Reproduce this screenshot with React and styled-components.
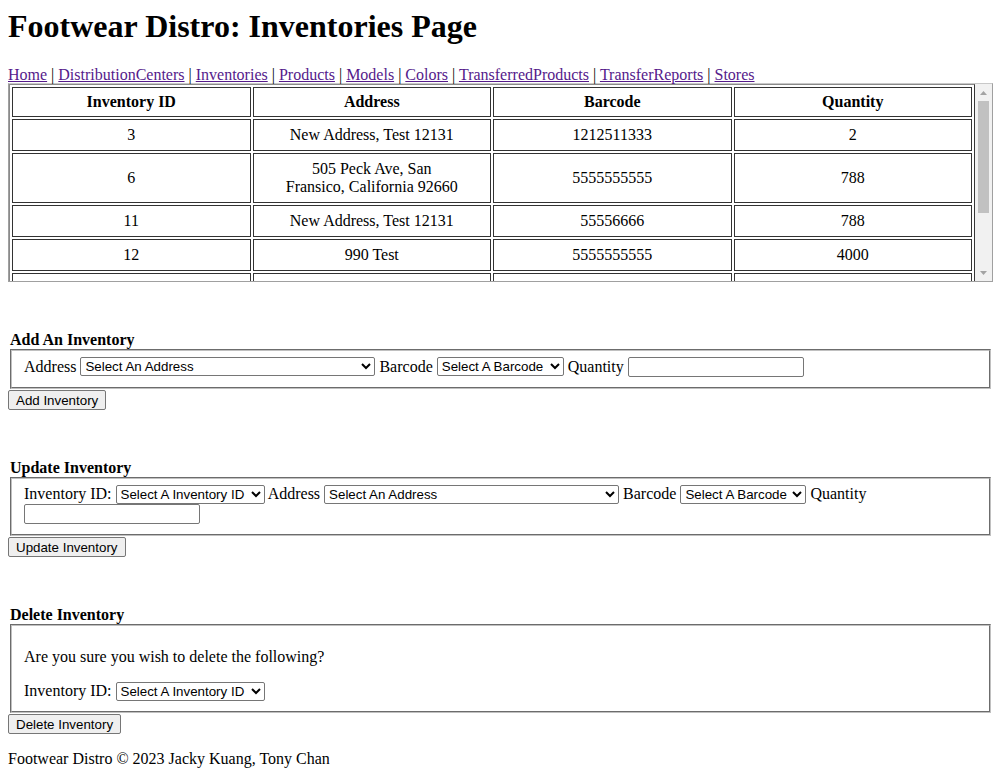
import React from 'react';
import styled, { createGlobalStyle } from 'styled-components';

// --- Global ---

const GlobalStyle = createGlobalStyle`
  body {
    margin: 8px;
    background: #fff;
    color: #000;
    font-family: "Liberation Serif", "Times New Roman", serif;
    font-size: 16px;
  }
`;

// --- Styled Components ---

const Title = styled.h1`
  margin: 0 0 21px;
  font-size: 32px;
  font-weight: bold;
  line-height: 37px;
`;

const Nav = styled.nav`
  line-height: 17px;
`;

const NavLink = styled.a`
  color: #551a8b;
  text-decoration: underline;
`;

const TableFrame = styled.div`
  display: flex;
  height: 197px;
  border: 1px solid #a0a0a0;
  border-top-color: #c8c8c8;
`;

const TableViewport = styled.div`
  flex: 1;
  overflow: hidden;
`;

const ScrollBar = styled.div`
  display: flex;
  flex-direction: column;
  width: 17px;
  flex-shrink: 0;
  background: #f1f1f1;
`;

const ScrollArrow = styled.div`
  display: flex;
  align-items: center;
  justify-content: center;
  height: 17px;
  flex-shrink: 0;
`;

const ScrollTrack = styled.div`
  flex: 1;
  padding: 0 3px;
`;

const ScrollThumb = styled.div`
  height: 112px;
  background: #c1c1c1;
`;

const Table = styled.table`
  width: 100%;
  table-layout: fixed;
  border: 1px outset #8a8a8a;
  border-spacing: 2px;
`;

const HeadCell = styled.th`
  padding: 5px 6px;
  border: 1px solid #333;
  font-weight: bold;
  text-align: center;
`;

const Cell = styled.td`
  padding: 6px;
  border: 1px solid #333;
  text-align: center;
`;

const Section = styled.section`
  margin-top: 49px;
`;

const Legend = styled.div`
  padding: 0 2px;
  font-weight: bold;
  line-height: 18px;
`;

const Fieldset = styled.fieldset`
  margin: 0 2px;
  padding: 5.6px 12px 10px;
  border: 2px groove rgb(192, 192, 192);
  min-inline-size: min-content;
`;

const Prompt = styled.p`
  margin: 16px 0;
`;

const Select = styled.select`
  width: ${(p) => p.$w}px;
  height: 19px;
  font: 13.333px "Liberation Sans", Arial, sans-serif;
  color: #000;
  border: 1px solid #767676;
  border-radius: 2px;
  background: #fff;
`;

const TextInput = styled.input`
  box-sizing: border-box;
  width: 176px;
  height: 20px;
  padding: 1px 2px;
  font: 13.333px "Liberation Sans", Arial, sans-serif;
  border: 1px solid #767676;
  border-radius: 2px;
`;

const Button = styled.button`
  height: 20px;
  padding: 1px 7px;
  font: 13.333px "Liberation Sans", Arial, sans-serif;
  color: #000;
  background: #efefef;
  border: 1px solid #767676;
  border-radius: 2px;
`;

const ButtonRow = styled.div`
  padding-top: 1px;
  line-height: 20px;
`;

const Footer = styled.p`
  margin: 16px 0;
`;

// --- Icons ---

const Triangle = ({ down }) => (
  <svg width="7" height="4" viewBox="0 0 7 4">
    <path d={down ? 'M0 0h7L3.5 4z' : 'M0 4h7L3.5 0z'} fill="#a3a3a3" />
  </svg>
);

// --- Data ---

const links = [
  'Home',
  'DistributionCenters',
  'Inventories',
  'Products',
  'Models',
  'Colors',
  'TransferredProducts',
  'TransferReports',
  'Stores',
];

const rows = [
  { id: 3, address: ['New Address, Test 12131'], barcode: '1212511333', qty: 2 },
  { id: 6, address: ['505 Peck Ave, San', 'Fransico, California 92660'], barcode: '5555555555', qty: 788 },
  { id: 11, address: ['New Address, Test 12131'], barcode: '55556666', qty: 788 },
  { id: 12, address: ['990 Test'], barcode: '5555555555', qty: 4000 },
  { id: 13, address: ['990 Test'], barcode: '1212511333', qty: 150 },
];

// --- Component ---

export default function App() {
  return (
    <>
      <GlobalStyle />
      <Title>Footwear Distro: Inventories Page</Title>
      <Nav>
        {links.map((l, i) => (
          <React.Fragment key={l}>
            {i > 0 && ' | '}
            <NavLink href="#">{l}</NavLink>
          </React.Fragment>
        ))}
      </Nav>

      <TableFrame>
        <TableViewport>
          <Table>
            <thead>
              <tr>
                <HeadCell>Inventory ID</HeadCell>
                <HeadCell>Address</HeadCell>
                <HeadCell>Barcode</HeadCell>
                <HeadCell>Quantity</HeadCell>
              </tr>
            </thead>
            <tbody>
              {rows.map((r) => (
                <tr key={r.id}>
                  <Cell>{r.id}</Cell>
                  <Cell>
                    {r.address.map((line, i) => (
                      <React.Fragment key={i}>
                        {i > 0 && <br />}
                        {line}
                      </React.Fragment>
                    ))}
                  </Cell>
                  <Cell>{r.barcode}</Cell>
                  <Cell>{r.qty}</Cell>
                </tr>
              ))}
            </tbody>
          </Table>
        </TableViewport>
        <ScrollBar>
          <ScrollArrow><Triangle /></ScrollArrow>
          <ScrollTrack>
            <ScrollThumb />
          </ScrollTrack>
          <ScrollArrow><Triangle down /></ScrollArrow>
        </ScrollBar>
      </TableFrame>

      <Section>
        <form>
          <Legend>Add An Inventory</Legend>
          <Fieldset>
            Address{' '}
            <Select $w={295}><option>Select An Address</option></Select>{' '}
            Barcode{' '}
            <Select $w={127}><option>Select A Barcode</option></Select>{' '}
            Quantity <TextInput type="text" />
          </Fieldset>
          <ButtonRow>
            <Button type="button">Add Inventory</Button>
          </ButtonRow>
        </form>
      </Section>

      <Section>
        <form>
          <Legend>Update Inventory</Legend>
          <Fieldset>
            Inventory ID:{' '}
            <Select $w={149}><option>Select A Inventory ID</option></Select>{' '}
            Address{' '}
            <Select $w={295}><option>Select An Address</option></Select>{' '}
            Barcode{' '}
            <Select $w={126}><option>Select A Barcode</option></Select>{' '}
            Quantity <TextInput type="text" />
          </Fieldset>
          <ButtonRow>
            <Button type="button">Update Inventory</Button>
          </ButtonRow>
        </form>
      </Section>

      <Section>
        <form>
          <Legend>Delete Inventory</Legend>
          <Fieldset>
            <Prompt>Are you sure you wish to delete the following?</Prompt>
            Inventory ID:{' '}
            <Select $w={149}><option>Select A Inventory ID</option></Select>
          </Fieldset>
          <ButtonRow>
            <Button type="button">Delete Inventory</Button>
          </ButtonRow>
        </form>
      </Section>

      <Footer>Footwear Distro © 2023 Jacky Kuang, Tony Chan</Footer>
    </>
  );
}
